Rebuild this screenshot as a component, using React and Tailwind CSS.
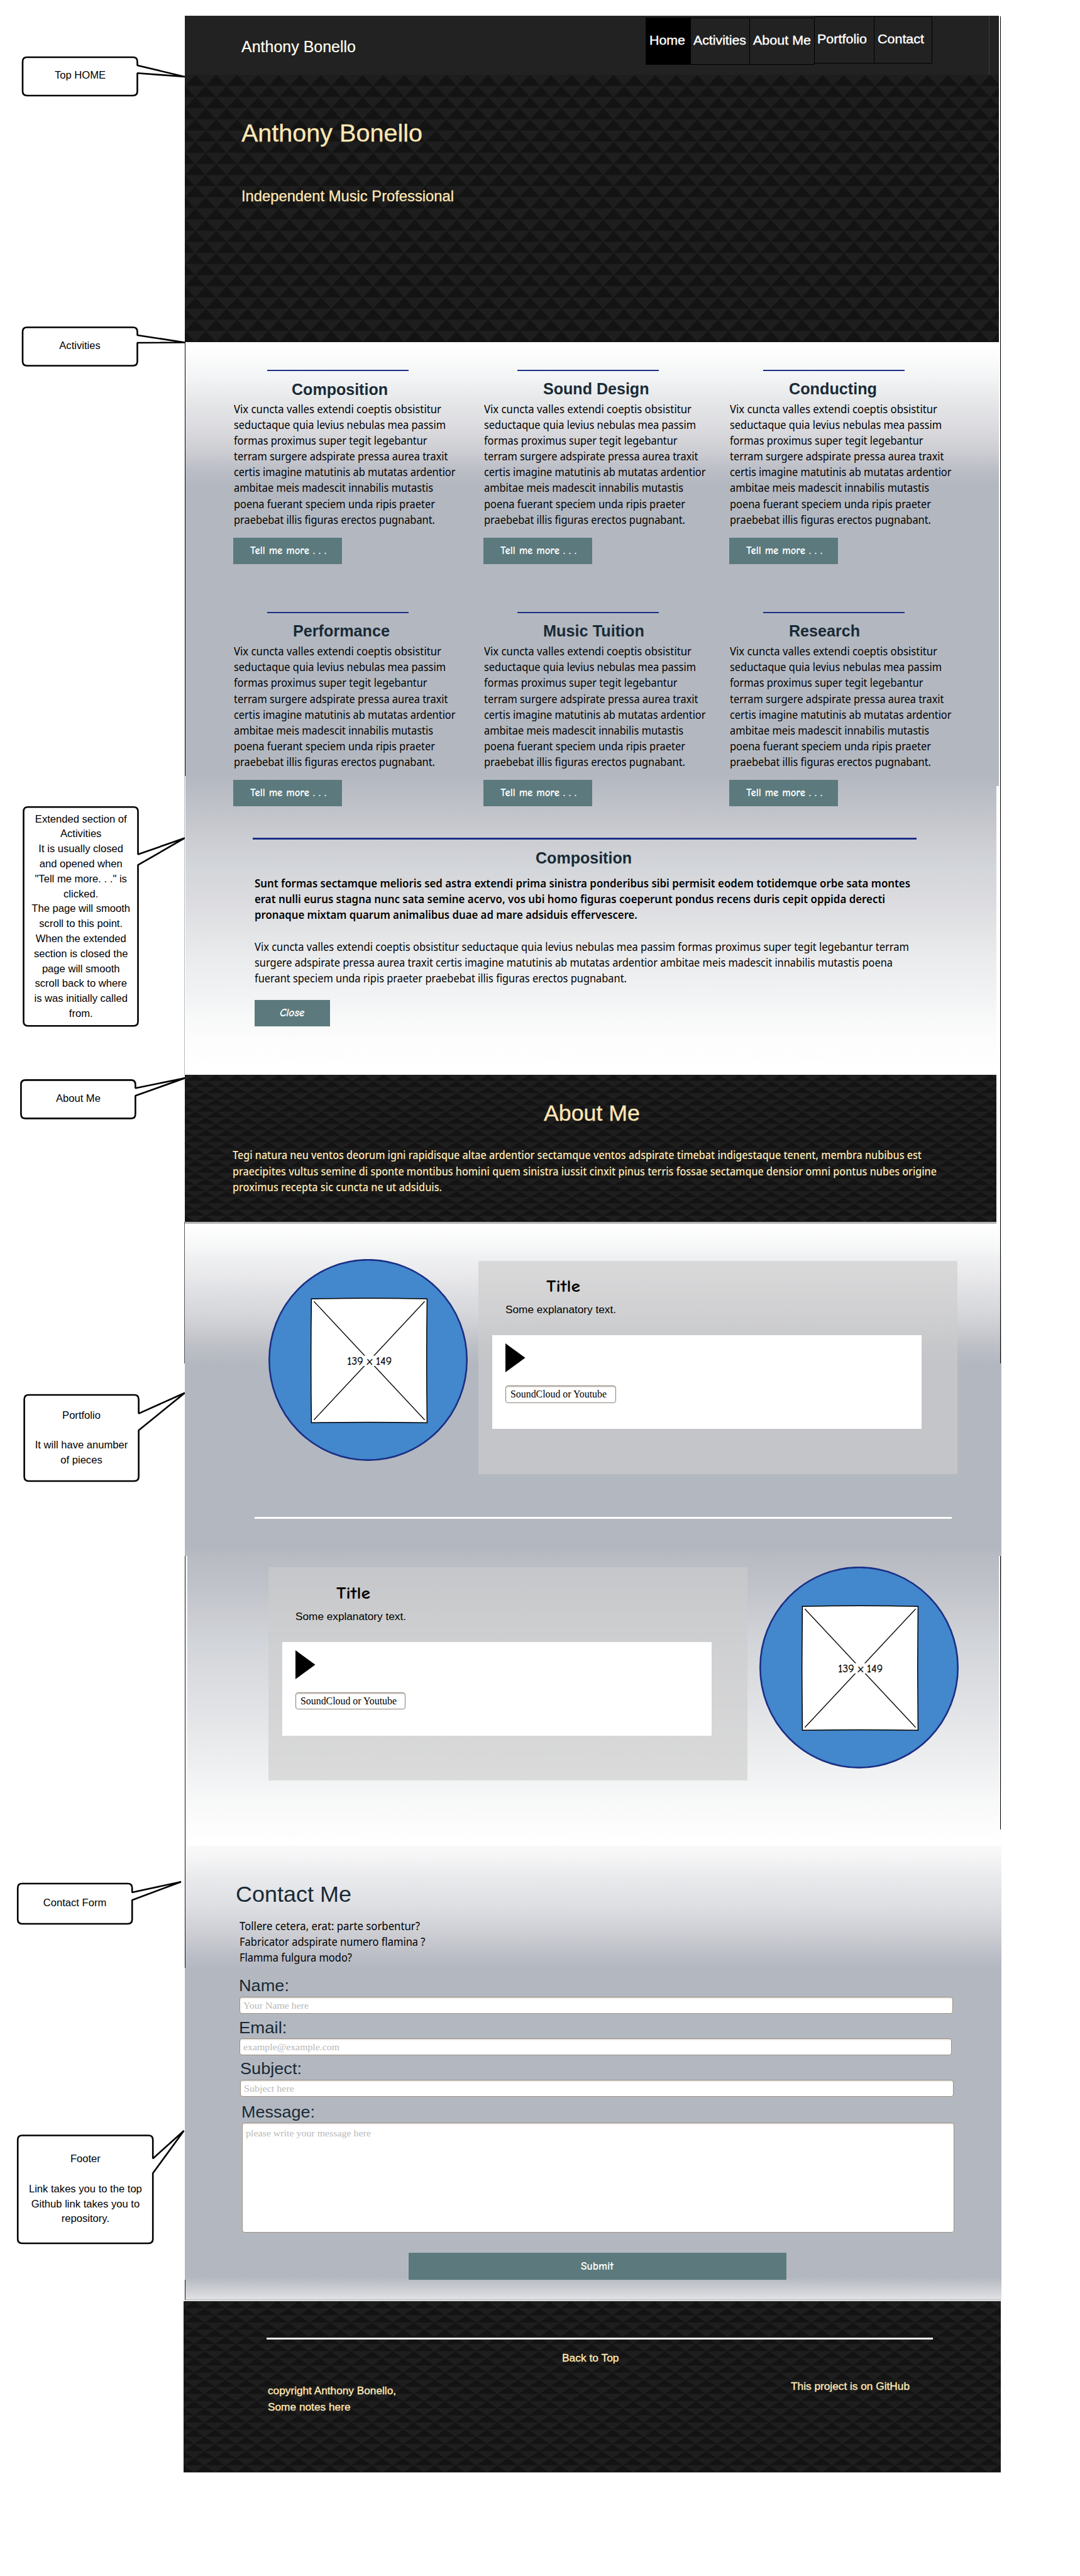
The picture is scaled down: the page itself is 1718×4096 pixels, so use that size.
import React, { useLayoutEffect, useRef, useState } from "react";

const SANS = "font-['Liberation_Sans',Arial,sans-serif]";
const BODY = "font-['Noto_Sans','Open_Sans',sans-serif]";
const COMIC = "font-['Comic_Sans_MS','Comic_Neue','Lato',sans-serif]";
const SERIF = "font-['Liberation_Serif','Times_New_Roman',serif]";

/* One line of text, condensed or widened to a set measure. */
function Fit({ w, className = "", children }) {
  const ref = useRef(null);
  const [scale, setScale] = useState(1);
  useLayoutEffect(() => {
    const natural = ref.current.offsetWidth;
    if (natural) setScale(w / ref.current.getBoundingClientRect().width);
  }, [w]);
  return (
    <span
      ref={ref}
      className={"inline-block origin-left whitespace-nowrap align-top " + className}
      style={{ transform: scale === 1 ? undefined : `scaleX(${scale})` }}
    >
      {children}
    </span>
  );
}

function Lines({ lines, className = "" }) {
  return (
    <div className={`${BODY} text-[17.4px] leading-[25.1px] ${className}`}>
      {lines.map(([text, w]) => (
        <div key={text} className="h-[25.1px]">
          <Fit w={w}>{text}</Fit>
        </div>
      ))}
    </div>
  );
}

function Triangles({ id, row }) {
  const p = 33.27;
  const h = p / 2;
  return (
    <svg className="absolute inset-0 h-full w-full" aria-hidden="true">
      <defs>
        <pattern id={id} width={p} height={row * 2} patternUnits="userSpaceOnUse">
          <rect width={p} height={row * 2} fill="#1e1e1e" />
          <g fill="#131313">
            <path d={`M${h} 0L${p} ${row}H0Z`} />
            <path d={`M0 ${row}L${h} ${row * 2}H${-h}Z`} />
            <path d={`M${p} ${row}L${p + h} ${row * 2}H${h}Z`} />
          </g>
          <path d={`M0 ${row}H${p}M0 ${row * 2}H${p}M0 0H${p}`} stroke="#191919" strokeWidth="1" />
        </pattern>
      </defs>
      <rect width="100%" height="100%" fill={`url(#${id})`} />
    </svg>
  );
}

const NAV = [
  ["Home", 57, "w-[71.3px] pl-[5.6px] bg-black mt-[1.6px]"],
  ["Activities", 84, "w-[94.7px] pl-[4px] mt-[1.6px]"],
  ["About Me", 92, "w-[103px] pl-[4.3px] mt-[1.6px]"],
  ["Portfolio", 79, "w-[94.8px] pl-[4px]"],
  ["Contact", 74, "w-[91.5px] pl-[4.5px]"],
];

function Header() {
  return (
    <header className="flex h-[93.5px] w-[1295.5px] border-t border-[#2d2d2d] bg-[#222222]">
      <div className={`${SANS} pl-[90.2px] pt-[32.7px] text-[25px] leading-[30px] text-[#fffff0] [-webkit-text-stroke:0.2px_#fffff0]`}>
        <Fit w={182}>Anthony Bonello</Fit>
      </div>
      <nav className={`${SANS} ml-auto flex text-[21px] leading-[30px] text-white`}>
        {NAV.map(([label, w, cls]) => (
          <a key={label} className={`block h-[75px] border border-l-0 border-black pt-[20px] [-webkit-text-stroke:0.4px_white] ${cls}`}>
            <Fit w={w}>{label}</Fit>
          </a>
        ))}
      </nav>
      <div className="ml-[90.5px] mr-[15px] w-px bg-[#3c3c3c]" />
    </header>
  );
}

function Hero() {
  return (
    <section className="relative h-[425px] w-[1295.5px]">
      <Triangles id="tri-hero" row={17.7} />
      <div className={`${SANS} relative pl-[90px] pt-[68.5px] text-[#ffe8b5] [-webkit-text-stroke:0.3px_#ffe8b5]`}>
        <h1 className="h-[48px] text-[39.4px] leading-[48px]">
          <Fit w={288}>Anthony Bonello</Fit>
        </h1>
        <p className="mt-[62.3px] text-[23.7px] leading-[30px]">
          <Fit w={338}>Independent Music Professional</Fit>
        </p>
      </div>
    </section>
  );
}

const VIX = [
  ["Vix cuncta valles extendi coeptis obsistitur", 330],
  ["seductaque quia levius nebulas mea passim", 337],
  ["formas proximus super tegit legebantur", 307.5],
  ["terram surgere adspirate pressa aurea traxit", 340.5],
  ["certis imagine matutinis ab mutatas ardentior", 352.5],
  ["ambitae meis madescit innabilis mutastis", 317],
  ["poena fuerant speciem unda ripis praeter", 320],
  ["praebebat illis figuras erectos pugnabant.", 320],
];

function TealButton({ label, w, className }) {
  return (
    <button className={`${COMIC} block bg-[#5c7a7e] text-left text-[18px] font-bold text-white ${className}`}>
      <Fit w={w}>{label}</Fit>
    </button>
  );
}

function Activity({ title, w, width, shift = "ml-[95px] mt-[13.2px]" }) {
  return (
    <article className={width}>
      <div className="ml-[54.3px] h-[2.3px] w-[224.3px] bg-[#1b2f86]" />
      <h3 className={`${SANS} h-[30px] text-[25px] font-bold leading-[30px] text-[#192a36] ${shift}`}>
        <Fit w={w}>{title}</Fit>
      </h3>
      <Lines lines={VIX} className="ml-[1.3px] mt-[5px] text-black" />
      <TealButton label="Tell me more . . ." w={121} className="mt-[15.8px] h-[42.3px] w-[172.8px] pl-[27px] leading-[42px]" />
    </article>
  );
}

function Activities() {
  return (
    <section className="ml-px h-[1165.2px] w-[1294.5px] bg-[linear-gradient(180deg,#fff_0px,#fcfcfc_22px,#f2f4f5_56px,#e4e5e7_100px,#dcdce0_134px,#cccdd2_175px,#bcbec7_203px,#b3b8c0_225px,#b3b8c0_690px,#c0c2c9_740px,#cccdd2_791px,#d3d6da_838px,#dbdbdf_884px,#e2e3e5_930px,#eaebed_977px,#f0f2f3_1032px,#f7f8f8_1069px,#fcfcfc_1106px,#fff_1153px)] pt-[44px]">
      <div className="flex h-[385.3px] pl-[76.5px]">
        <Activity title="Composition" w={153} width="w-[398px]" shift="ml-[93px] mt-[14.2px] -mb-px" />
        <Activity title="Sound Design" w={168.5} width="w-[391px]" />
        <Activity title="Conducting" w={140} width="w-[380px]" />
      </div>
      <div className="flex h-[359.7px] pl-[76.5px]">
        <Activity title="Performance" w={154} width="w-[398px]" />
        <Activity title="Music Tuition" w={161} width="w-[391px]" />
        <Activity title="Research" w={113} width="w-[380px]" />
      </div>
      <div className="pl-[107px]">
        <div className="h-[2.3px] w-[1056px] bg-[#1b2f86]" />
        <h3 className={`${SANS} ml-[450.5px] mt-[14.5px] h-[30px] text-[25px] font-bold leading-[30px] text-[#192a36]`}>
          <Fit w={153}>Composition</Fit>
        </h3>
        <Lines
          className="ml-[3px] mt-[12.8px] font-semibold text-black"
          lines={[
            ["Sunt formas sectamque melioris sed astra extendi prima sinistra ponderibus sibi permisit eodem totidemque orbe sata montes", 1043],
            ["erat nulli eurus stagna nunc sata semine acervo, vos ubi homo figuras coeperunt pondus recens duris cepit oppida derecti", 1003],
            ["pronaque mixtam quarum animalibus duae ad mare adsiduis effervescere.", 609],
          ]}
        />
        <Lines
          className="ml-[3.3px] mt-[25.3px] text-black"
          lines={[
            ["Vix cuncta valles extendi coeptis obsistitur seductaque quia levius nebulas mea passim formas proximus super tegit legebantur terram", 1041],
            ["surgere adspirate pressa aurea traxit certis imagine matutinis ab mutatas ardentior ambitae meis madescit innabilis mutastis poena", 1015],
            ["fuerant speciem unda ripis praeter praebebat illis figuras erectos pugnabant.", 592],
          ]}
        />
        <TealButton label="Close" w={39.5} className="ml-[3px] mt-[21.8px] h-[42px] w-[120px] pl-[40px] italic leading-[42px]" />
      </div>
    </section>
  );
}

function About() {
  return (
    <section className="relative h-[236.9px] w-[1291.5px] border-b-[3px] border-[#b9b9b9]">
      <Triangles id="tri-about" row={9.74} />
      <div className="relative pt-[40.8px] text-[#ffe8b5]">
        <h2 className={`${SANS} ml-[571px] h-[42px] text-[35.4px] leading-[42px] [-webkit-text-stroke:0.3px_#ffe8b5]`}>
          <Fit w={153}>About Me</Fit>
        </h2>
        <Lines
          className="ml-[76.5px] mt-[33px] font-medium"
          lines={[
            ["Tegi natura neu ventos deorum igni rapidisque altae ardentior sectamque ventos adspirate timebat indigestaque tenent, membra nubibus est", 1096],
            ["praecipites vultus semine di sponte montibus homini quem sinistra iussit cinxit pinus terris fossae sectamque densior omni pontus nubes origine", 1120],
            ["proximus recepta sic cuncta ne ut adsiduis.", 333],
          ]}
        />
      </div>
    </section>
  );
}

function PictureDisc({ className }) {
  return (
    <div className={`shrink-0 ${className}`}>
      <svg width="317" height="321" viewBox="0 0 317 321">
        <ellipse cx="158.5" cy="160.4" rx="157.2" ry="159.2" fill="#4387cc" stroke="#1a2f85" strokeWidth="2.6" />
        <path d="M68.4 63.2Q160 61.2 252.4 63.2Q251 162 252.4 260.2Q160 258.6 68.4 260.2Q67 162 68.4 63.2Z" fill="#fff" stroke="#000" strokeWidth="1.5" />
        <path d="M72.3 67.2L248.6 255.8M248.6 67.2L72.3 255.8" stroke="#000" strokeWidth="1.3" />
        <rect x="124" y="153.6" width="73" height="16.4" fill="#fff" />
        <text x="125.2" y="167.6" textLength="71" lengthAdjust="spacingAndGlyphs" className={`${COMIC} text-[17.5px] font-medium`} fill="#000" stroke="#000" strokeWidth="0.3">
          139 x 149
        </text>
      </svg>
    </div>
  );
}

function PlayerCard({ className }) {
  return (
    <div className={`h-[339px] w-[762.2px] shrink-0 bg-[#cccccc]/[0.63] pt-[26.9px] text-black ${className}`}>
      <div className={`${COMIC} ml-[107.5px] h-[30px] text-[26px] font-bold leading-[31px]`}>
        <Fit w={54}>Title</Fit>
      </div>
      <div className={`${SANS} ml-[42.8px] mt-[8.8px] h-[24px] text-[17.3px] leading-[24px]`}>
        <Fit w={176}>Some explanatory text.</Fit>
      </div>
      <div className="ml-[21.6px] mt-[28.6px] h-[149.4px] w-[683px] bg-white pl-[21.5px] pt-[13.6px]">
        <svg className="block" width="32" height="46" viewBox="0 0 32 46">
          <path d="M0 0L31.5 23L0 46Z" fill="#000" />
        </svg>
        <div className={`${SERIF} mt-[20.4px] h-[27.7px] w-[175.3px] rounded-[4px] border border-[#8f8378] pl-[6.5px] text-[16px] leading-[26px] shadow-[inset_0_1.5px_1px_#c9c4be]`}>
          <Fit w={153}>SoundCloud or Youtube</Fit>
        </div>
      </div>
    </div>
  );
}

function Portfolio() {
  return (
    <section className="h-[989.3px] w-[1299px] bg-[linear-gradient(180deg,#fff_0px,#f7f8f8_33px,#eff0f2_55px,#e9e9ec_82px,#dfe0e3_109px,#d5d6da_143px,#cbcdd2_166px,#bdbfc6_196px,#b3b8c0_222px,#b3b8c0_516px,#b8bbc2_530px,#c0c2ca_575px,#c8cad0_613px,#d2d5d9_670px,#dedfe3_745px,#e9eaec_821px,#f1f2f3_878px,#f7f8f8_916px,#fcfcfc_954px,#fff_989px)] pt-[56.3px]">
      <div className="flex h-[410.3px] items-start">
        <PictureDisc className="ml-[133.5px]" />
        <PlayerCard className="ml-[17.2px] mt-[2.7px]" />
      </div>
      <div className="ml-[111.7px] h-[2.7px] w-[1108.4px] bg-white" />
      <div className="mt-[75.9px] flex items-start">
        <PlayerCard className="ml-[133.6px] mt-[1.5px]" />
        <PictureDisc className="ml-[18.6px]" />
      </div>
    </section>
  );
}

function Field({ label, lw, hint, hw, labelClass, boxClass }) {
  return (
    <label className="block">
      <div className={`${SANS} h-[30px] text-[26.4px] leading-[30px] text-[#192a36] ${labelClass}`}>
        <Fit w={lw}>{label}</Fit>
      </div>
      <div className={`${SERIF} rounded-[4px] border-[1.5px] border-[#9c9084] bg-white pl-[5px] text-[15.6px] leading-[26px] text-[#b8b8b8] shadow-[inset_0_1.5px_1px_#dcdad6] ${boxClass}`}>
        <Fit w={hw}>{hint}</Fit>
      </div>
    </label>
  );
}

function Contact() {
  return (
    <section className="h-[724.6px] w-[1299px] bg-[linear-gradient(180deg,#f9f9fa_0px,#f6f6f7_15px,#e9eaec_51px,#dddee2_98px,#cbccd2_144px,#bbbdc6_177px,#b3b8c0_194px,#b3b8c0_686px,#bbbec5_692px,#dfe0e3_720px,#dfe0e3_724px)] pt-[56.6px]">
      <h2 className={`${SANS} ml-[81.3px] h-[42px] text-[35.4px] leading-[42px] text-[#192a36]`}>
        <Fit w={184}>Contact Me</Fit>
      </h2>
      <Lines
        className="ml-[87.8px] mt-[16.7px] text-black"
        lines={[
          ["Tollere cetera, erat: parte sorbentur?", 287],
          ["Fabricator adspirate numero flamina ?", 295.5],
          ["Flamma fulgura modo?", 179],
        ]}
      />
      <form>
        <Field label="Name:" lw={80} hint="Your Name here" hw={104} labelClass="ml-[86.3px] mt-[17px]" boxClass="ml-[87.4px] mt-[2.4px] h-[27px] w-[1135px]" />
        <Field label="Email:" lw={76.5} hint="example@example.com" hw={153} labelClass="ml-[86.3px] mt-[6.8px]" boxClass="ml-[87.4px] mt-[2.5px] h-[26.6px] w-[1133px]" />
        <Field label="Subject:" lw={98} hint="Subject here" hw={80} labelClass="ml-[88.2px] mt-[6.7px]" boxClass="ml-[88.3px] mt-[3px] h-[26.5px] w-[1135px]" />
        <Field label="Message:" lw={117} hint="please write your message here" hw={199} labelClass="ml-[90.3px] mt-[8.6px]" boxClass="ml-[91px] mt-[2px] h-[175.2px] w-[1133px] pt-[3px]" />
        <button type="button" className={`${COMIC} ml-[356.7px] mt-[32.2px] block h-[43.6px] w-[601px] bg-[#5c7a7e] text-center text-[18px] font-bold leading-[43px] text-white`}>
          <Fit w={52}>Submit</Fit>
        </button>
      </form>
    </section>
  );
}

function Footer() {
  return (
    <footer className="relative -ml-[1.8px] h-[272.3px] w-[1300px]">
      <Triangles id="tri-foot" row={11.35} />
      <div className={`${SANS} relative pt-[57.2px] text-[16.75px] leading-[24px] text-[#ffe8b5] [-webkit-text-stroke:0.35px_#ffe8b5]`}>
        <div className="ml-[131.9px] h-[3px] w-[1060px] bg-[#f4f4f4]" />
        <div className="ml-[602.7px] mt-[18.4px] h-[24px]">
          <Fit w={90.5}>Back to Top</Fit>
        </div>
        <div className="flex h-[76px] justify-between pl-[133.8px] pt-[21.4px]">
          <div className="pt-[6.2px] leading-[26.5px]">
            <div className="-mt-px h-[26.5px]"><Fit w={204}>copyright Anthony Bonello,</Fit></div>
            <div className="h-[26.5px]"><Fit w={131.5}>Some notes here</Fit></div>
          </div>
          <div className="w-[333.5px]"><Fit w={189}>This project is on GitHub</Fit></div>
        </div>
      </div>
    </footer>
  );
}

/* Callout bubbles: box x, y, w, h; tail roots and tip in page pixels. */
const NOTES = [
  { x: 36, y: 91, w: 182.5, h: 61, a: 104, b: 116.2, tx: 294, ty: 122, cx: 127.5, base: 125.4, lines: ["Top HOME"] },
  { x: 36, y: 520.5, w: 182.5, h: 61, a: 533, b: 545, tx: 294, ty: 544.5, cx: 127, base: 555, lines: ["Activities"] },
  {
    x: 37.5, y: 1283.3, w: 182, h: 348, a: 1358.5, b: 1375.4, tx: 294, ty: 1332.5, cx: 128.7, base: 1307.5,
    lines: ["Extended section of", "Activities", "It is usually closed", "and opened when", "\"Tell me more. . .\" is", "clicked.", "The page will smooth", "scroll to this point.", "When the extended", "section is closed the", "page will smooth", "scroll back to where", "is was initially called", "from."],
  },
  { x: 33.4, y: 1717.4, w: 182, h: 61, a: 1730.3, b: 1742.2, tx: 294, ty: 1714.3, cx: 124.4, base: 1752, lines: ["About Me"] },
  { x: 38.6, y: 2218, w: 182, h: 137, a: 2247.6, b: 2274.2, tx: 294, ty: 2214.8, cx: 129.5, base: 2255.5, lines: ["Portfolio", "", "It will have anumber", "of pieces"] },
  { x: 28.2, y: 2995, w: 182, h: 64, a: 3008.9, b: 3021.2, tx: 288, ty: 2992.2, cx: 119, base: 3031.4, lines: ["Contact Form"] },
  { x: 28.2, y: 3395.5, w: 215, h: 171.5, a: 3432.3, b: 3455.5, tx: 292.5, ty: 3388, cx: 135.9, base: 3438.2, lines: ["Footer", "", "Link takes you to the top", "Github link takes you to", "repository."] },
];

function Note({ n }) {
  const r = n.x + n.w;
  const bt = n.y + n.h;
  const q = 7;
  const d = `M${n.x + q} ${n.y}H${r - q}Q${r} ${n.y} ${r} ${n.y + q}V${n.a}L${n.tx} ${n.ty}L${r} ${n.b}V${bt - q}Q${r} ${bt} ${r - q} ${bt}H${n.x + q}Q${n.x} ${bt} ${n.x} ${bt - q}V${n.y + q}Q${n.x} ${n.y} ${n.x + q} ${n.y}Z`;
  return (
    <g>
      <path d={d} fill="#fff" stroke="#000" strokeWidth="2.6" strokeLinejoin="bevel" />
      {n.lines.map((t, i) => (
        <text key={i} x={n.cx} y={n.base + i * 23.8} textAnchor="middle" className={`${SANS} text-[16.6px]`} fill="#000">
          {t}
        </text>
      ))}
    </g>
  );
}

export default function App() {
  return (
    <div className="relative h-[4096px] w-[1718px] overflow-hidden bg-white">
      <main className="ml-[293.5px] w-[1299px] pt-[25px]">
        <Header />
        <Hero />
        <Activities />
        <About />
        <Portfolio />
        <Contact />
        <Footer />
      </main>

      {/* page outline */}
      <div className="absolute left-[1585px] top-[1250px] h-[459px] w-[6px] bg-white" />
      <div className="absolute left-[1591px] top-[26px] h-[2142px] w-[1.3px] bg-black" />
      <div className="absolute left-[294px] top-[544px] h-[690px] w-px bg-black" />
      <div className="absolute left-[293px] top-[1234px] h-[475px] w-px bg-[#b3b8c0]" />
      <div className="absolute left-[293px] top-[1943px] h-[225px] w-px bg-[#555]" />
      <div className="absolute left-[295px] top-[2474px] h-[461px] w-[3px] bg-white/80" />
      <div className="absolute left-[294px] top-[2474px] h-[655px] w-px bg-[#111]" />
      <div className="absolute left-[1589px] top-[2474px] h-[461px] w-[2px] bg-white/90" />
      <div className="absolute left-[1591px] top-[2474px] h-[435px] w-[1.3px] bg-black" />
      <div className="absolute left-[294px] top-[3625px] h-[32px] w-px bg-[#111]" />
      <div className="absolute left-[295px] top-[3656px] h-px w-[1297px] bg-[#bcbfc4]" />

      <svg className="absolute left-0 top-0 h-[4096px] w-[294px]" viewBox="0 0 294 4096" aria-label="Annotations">
        {NOTES.map((n) => (
          <Note key={n.y} n={n} />
        ))}
      </svg>
    </div>
  );
}
